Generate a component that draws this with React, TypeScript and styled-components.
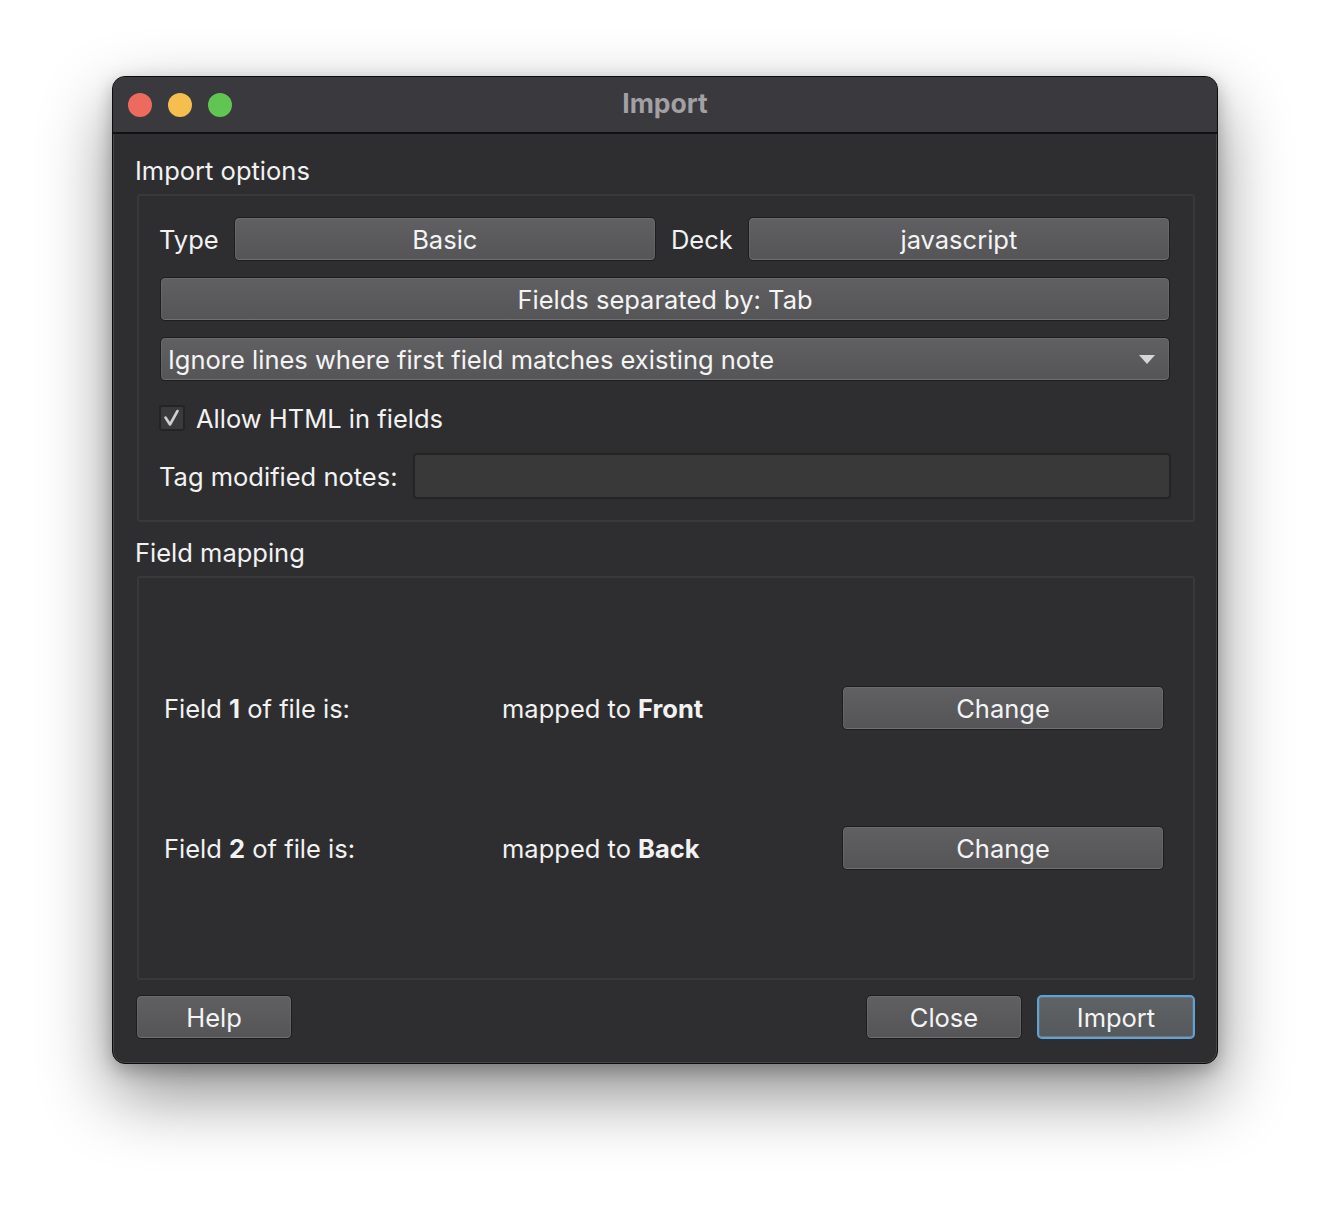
import React from "react";
import styled, { createGlobalStyle } from "styled-components";

const Global = createGlobalStyle`
  html, body { margin: 0; padding: 0; background: #ffffff; }
  body { font-family: Inter, "Open Sans", "Liberation Sans", sans-serif; }
  * { box-sizing: border-box; }
`;

const Page = styled.div`
  width: 1330px;
  height: 1212px;
  padding: 76px 112px 0 112px;
  background: #ffffff;
`;

const Window = styled.div`
  width: 1106px;
  height: 988px;
  border-radius: 13px;
  background: #2e2e30;
  border: 1px solid #0c0c0d;
  box-shadow: 0 30px 70px rgba(0, 0, 0, 0.45), 0 6px 18px rgba(0, 0, 0, 0.25),
    inset 0 0 0 1px rgba(255, 255, 255, 0.12);
  display: flex;
  flex-direction: column;
  overflow: hidden;
  color: #f2f2f2;
  font-size: 25.5px;
`;

const TitleBar = styled.div`
  height: 57px;
  flex: none;
  background: #3a393d;
  border-bottom: 2px solid #111112;
  display: flex;
  align-items: center;
  position: relative;
  padding-left: 15px;
  gap: 16px;
`;

const Light = styled.span<{ $c: string }>`
  width: 24px;
  height: 24px;
  border-radius: 50%;
  background: ${(p) => p.$c};
`;

const Title = styled.div`
  position: absolute;
  left: 0;
  right: 0;
  top: 0;
  bottom: 0;
  display: flex;
  align-items: center;
  justify-content: center;
  font-weight: 700;
  color: #a2a0a5;
  font-size: 26.5px;
  pointer-events: none;
  padding: 0 0 3px 0;
`;

const Body = styled.div`
  flex: 1;
  display: flex;
  flex-direction: column;
  padding: 22px 22px 0 22px;
`;

const SectionTitle = styled.div<{ $gap?: number }>`
  height: 30px;
  line-height: 30px;
  margin-top: ${(p) => p.$gap ?? 0}px;
  margin-bottom: 8px;
  font-size: 25.5px;
`;

const Group = styled.div<{ $h: number }>`
  height: ${(p) => p.$h}px;
  margin-left: 2px;
  border: 2px solid #39393b;
  border-radius: 3px;
`;

const OptionsGrid = styled.div`
  display: flex;
  flex-direction: column;
  padding: 21px 23px 0 20px;
`;

const TypeRow = styled.div`
  display: grid;
  grid-template-columns: auto 1fr auto 1fr;
  align-items: center;
  column-gap: 15px;
  height: 44px;
`;

const Label = styled.span`
  white-space: nowrap;
`;

const Button = styled.button<{ $primary?: boolean }>`
  height: 44px;
  width: 100%;
  font-family: inherit;
  font-size: 25.5px;
  color: #f4f4f4;
  border-radius: 5px;
  border: ${(p) => (p.$primary ? "2px solid #5ba3d9" : "1px solid #1d1d1e")};
  background: ${(p) =>
    p.$primary
      ? "linear-gradient(#606366, #56595c)"
      : "linear-gradient(#606062, #555557)"};
  box-shadow: inset 0 0 0 1px rgba(255, 255, 255, 0.07),
    inset 0 -1px 0 rgba(255, 255, 255, 0.1);
  padding: 0 8px;
  display: flex;
  align-items: center;
  justify-content: center;
  white-space: nowrap;
`;

const WideButton = styled(Button)`
  margin-top: 16px;
  margin-left: 1px;
  width: auto;
`;

const Combo = styled(Button)`
  margin-top: 16px;
  margin-left: 1px;
  width: auto;
  height: 44px;
  justify-content: space-between;
  padding: 0 14px 0 7px;
`;

const Arrow = styled.span`
  width: 0;
  height: 0;
  border-left: 8px solid transparent;
  border-right: 8px solid transparent;
  border-top: 9px solid #d6d6d6;
  margin-top: 1px;
`;

const CheckRow = styled.label`
  display: flex;
  align-items: center;
  gap: 11px;
  height: 26px;
  margin-top: 24px;
`;

const CheckBox = styled.span`
  width: 26px;
  height: 26px;
  border: 2px solid #242426;
  background: #3a3a3c;
  border-radius: 3px;
  display: flex;
  align-items: center;
  justify-content: center;
`;

const TagRow = styled.div`
  display: flex;
  align-items: center;
  gap: 15px;
  margin-top: 22px;
  height: 46px;
`;

const Input = styled.div`
  flex: 1;
  height: 46px;
  margin-right: -1px;
  background: #393939;
  border: 2px solid #242425;
  border-radius: 4px;
`;

const MappingInner = styled.div`
  height: 100%;
  display: flex;
  flex-direction: column;
  justify-content: center;
  gap: 96px;
  padding: 0 29px 0 25px;
`;

const MapRow = styled.div`
  display: grid;
  grid-template-columns: 338px 1fr 322px;
  align-items: center;
  height: 44px;
`;

const Footer = styled.div`
  display: flex;
  align-items: center;
  gap: 15px;
  margin-top: 15px;
  padding-left: 1px;
`;

const FooterButton = styled(Button)`
  width: 156px;
`;

const PrimaryButton = styled(Button)`
  width: 158px;
`;

const Spacer = styled.div`
  flex: 1;
`;

export default function App() {
  return (
    <Page>
      <Global />
      <Window>
        <TitleBar>
          <Light $c="#ed6a5e" />
          <Light $c="#f4bf4f" />
          <Light $c="#61c554" />
          <Title>Import</Title>
        </TitleBar>
        <Body>
          <SectionTitle>Import options</SectionTitle>
          <Group $h={328}>
            <OptionsGrid>
              <TypeRow>
                <Label>Type</Label>
                <Button>Basic</Button>
                <Label>Deck</Label>
                <Button>javascript</Button>
              </TypeRow>
              <WideButton>Fields separated by: Tab</WideButton>
              <Combo>
                <span>Ignore lines where first field matches existing note</span>
                <Arrow />
              </Combo>
              <CheckRow>
                <CheckBox>
                  <svg width="20" height="20" viewBox="0 0 20 20">
                    <path
                      d="M3.5 9.5 L8 16.5 L15.5 3"
                      fill="none"
                      stroke="#cfcfcf"
                      strokeWidth="2.6"
                      strokeLinecap="round"
                      strokeLinejoin="round"
                    />
                  </svg>
                </CheckBox>
                <Label>Allow HTML in fields</Label>
              </CheckRow>
              <TagRow>
                <Label>Tag modified notes:</Label>
                <Input />
              </TagRow>
            </OptionsGrid>
          </Group>
          <SectionTitle $gap={16}>Field mapping</SectionTitle>
          <Group $h={404}>
            <MappingInner>
              <MapRow>
                <Label>
                  Field <b>1</b> of file is:
                </Label>
                <Label>
                  mapped to <b>Front</b>
                </Label>
                <Button>Change</Button>
              </MapRow>
              <MapRow>
                <Label>
                  Field <b>2</b> of file is:
                </Label>
                <Label>
                  mapped to <b>Back</b>
                </Label>
                <Button>Change</Button>
              </MapRow>
            </MappingInner>
          </Group>
          <Footer>
            <FooterButton>Help</FooterButton>
            <Spacer />
            <FooterButton>Close</FooterButton>
            <PrimaryButton $primary>Import</PrimaryButton>
          </Footer>
        </Body>
      </Window>
    </Page>
  );
}
